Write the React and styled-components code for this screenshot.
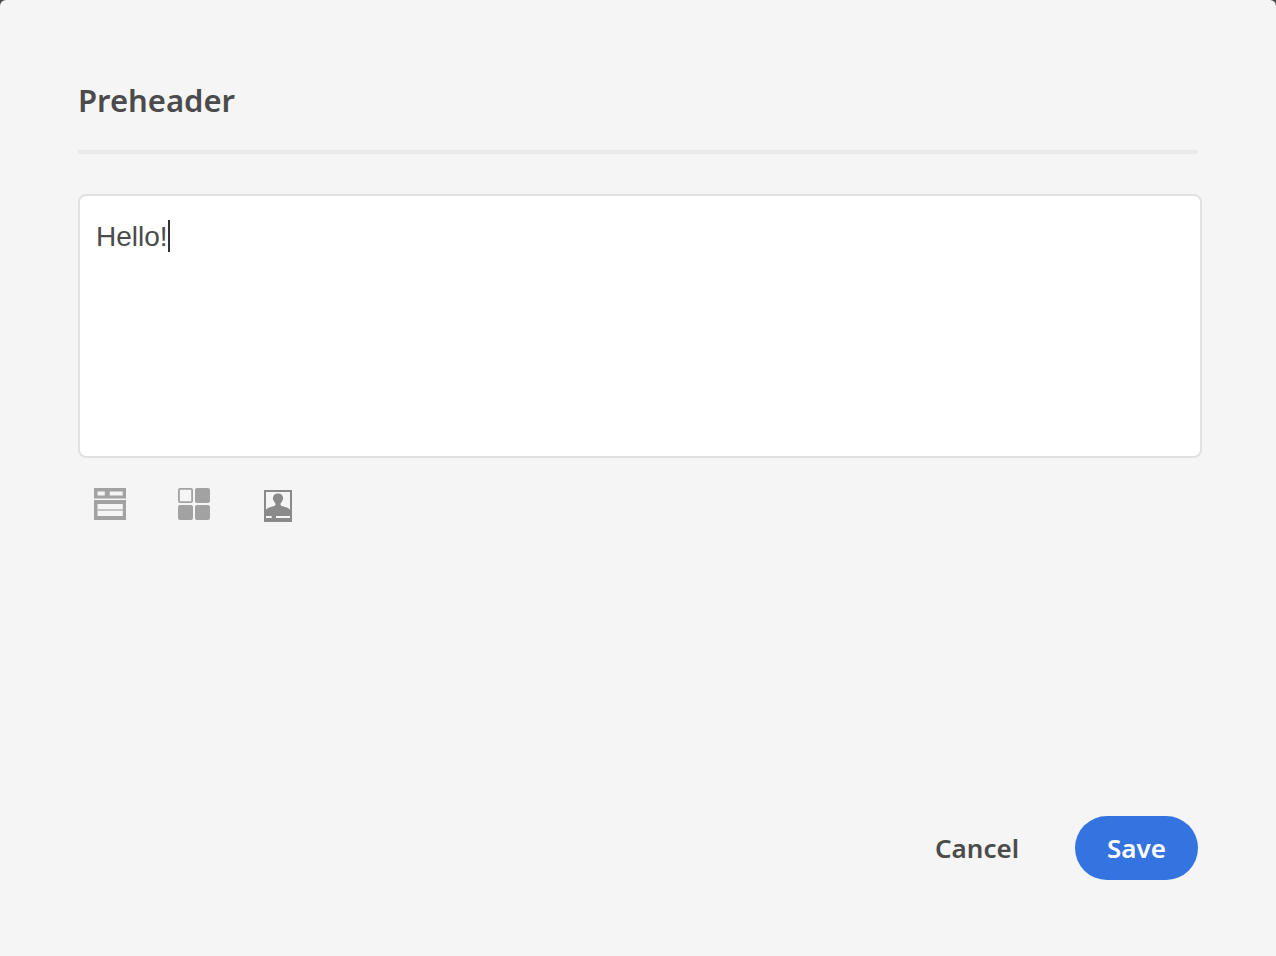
import React, { useLayoutEffect, useRef, useState } from "react";
import styled, { createGlobalStyle } from "styled-components";

const GlobalStyle = createGlobalStyle`
  *, *::before, *::after { box-sizing: border-box; }
  body { margin: 0; background: #4b4b4b; }
`;

const Dialog = styled.form`
  display: flex;
  flex-direction: column;
  min-height: 100vh;
  padding: 76px 78px;
  border-radius: 6px 6px 0 0;
  background: #f5f5f5;
  color: #4b4b4b;
  font-family: "Noto Sans", "Open Sans", sans-serif;
`;

const Header = styled.header`
  padding-bottom: 26px;
  border-bottom: 4px solid #eaeaea;
  border-radius: 1px;
`;

const Title = styled.h1`
  margin: 0;
  font-size: 31px;
  line-height: 48px;
  font-weight: 600;
`;

const Editor = styled.div`
  position: relative;
  display: flex;
  margin: 40px -4px 0 0;
`;

const TextArea = styled.textarea`
  flex: 1;
  min-width: 0;
  height: 264px;
  padding: 23px 16px;
  border: 2px solid #e1e1e1;
  border-radius: 8px;
  outline: none;
  resize: none;
  background: #fff;
  color: #4b4b4b;
  caret-color: transparent;
  font-family: "Liberation Sans", Arial, sans-serif;
  font-size: 28px;
  line-height: 36px;
`;

const Caret = styled.span`
  position: absolute;
  top: 26px;
  left: 18px;
  width: 2px;
  height: 32px;
  background: #323232;
  pointer-events: none;
`;

const Toolbar = styled.div`
  display: flex;
  gap: 20px;
  margin-top: 14px;
`;

const IconButton = styled.button`
  display: flex;
  align-items: center;
  justify-content: center;
  width: 64px;
  height: 64px;
  padding: 0;
  border: 0;
  background: transparent;
  color: ${(p) => (p.$strong ? "#8a8a8a" : "#a2a2a2")};
  cursor: pointer;
`;

const Footer = styled.footer`
  display: flex;
  justify-content: flex-end;
  gap: 24px;
  margin-top: auto;
`;

const Button = styled.button`
  height: 64px;
  padding: 0 32px;
  border: 0;
  border-radius: 32px;
  background: ${(p) => (p.$primary ? "#3474e0" : "transparent")};
  color: ${(p) => (p.$primary ? "#fff" : "#4b4b4b")};
  font-family: inherit;
  font-size: 26px;
  line-height: 36px;
  font-weight: 600;
  cursor: pointer;
`;

const ContentBlockIcon = () => (
  <svg width="32" height="36" viewBox="0 0 32 36" fill="currentColor" fillRule="evenodd" aria-hidden="true">
    <path d="M0 2h32v10.500H0zM3.500 5.500v4H10.800v-4zM15.700 5.500v4h13v-4z" />
    <path d="M0 14h32v20H0zM3.500 18v12h25.300V18z" />
    <path d="M3.500 23h25.300v2h-25.300z" opacity=".6" />
  </svg>
);

const DynamicContentIcon = () => (
  <svg width="32" height="36" viewBox="0 0 32 36" fill="currentColor" aria-hidden="true">
    <rect x="0.9" y="2.9" width="13.200" height="13.200" rx="1.200" fill="none" stroke="currentColor" strokeWidth="1.8" />
    <rect x="17" y="2" width="15" height="15" rx="2" />
    <rect x="0" y="19" width="15" height="15" rx="2" />
    <rect x="17" y="19" width="15" height="15" rx="2" />
  </svg>
);

const PersonalizationIcon = () => (
  <svg width="32" height="36" viewBox="0 0 32 36" fill="currentColor" fillRule="evenodd" aria-hidden="true">
    <path d="M2 4h28v32H2zM4 6v18c.8-1.500 2.200-2.200 4-2.700l4-1.300c1.200-.4 1.500-1 1.500-1.800 0-.9-.5-1.400-1.200-2.300-1-1.300-1.400-2.500-1.400-3.800C10.900 9.200 12.900 7.400 16 7.400s5.100 1.800 5.100 4.700c0 1.300-.4 2.500-1.400 3.800-.7.900-1.200 1.400-1.200 2.300 0 .8.300 1.400 1.500 1.800l4 1.300c1.800.5 3.200 1.200 4 2.700V6zM4 30v2h5.700v-2zM14 30v2h14v-2z" />
  </svg>
);

const tools = [
  { label: "Insert content block", Icon: ContentBlockIcon },
  { label: "Insert dynamic content", Icon: DynamicContentIcon },
  { label: "Insert personalization field", Icon: PersonalizationIcon, strong: true },
];

export default function App() {
  const [text, setText] = useState("Hello!");
  const [caretOffset, setCaretOffset] = useState(0);
  const field = useRef(null);

  useLayoutEffect(() => {
    const context = document.createElement("canvas").getContext("2d");
    const { fontSize, fontFamily } = getComputedStyle(field.current);
    context.font = `${fontSize} ${fontFamily}`;
    setCaretOffset(Math.round(context.measureText(text).width));
  }, [text]);

  return (
    <>
      <GlobalStyle />
      <Dialog onSubmit={(e) => e.preventDefault()}>
        <Header>
          <Title id="preheader-title">Preheader</Title>
        </Header>
        <Editor>
          <TextArea
            ref={field}
            aria-labelledby="preheader-title"
            value={text}
            onChange={(e) => setText(e.target.value)}
          />
          <Caret style={{ transform: `translateX(${caretOffset}px)` }} />
        </Editor>
        <Toolbar>
          {tools.map(({ label, Icon, strong }) => (
            <IconButton key={label} type="button" aria-label={label} $strong={strong}>
              <Icon />
            </IconButton>
          ))}
        </Toolbar>
        <Footer>
          <Button type="button">Cancel</Button>
          <Button type="submit" $primary>Save</Button>
        </Footer>
      </Dialog>
    </>
  );
}
